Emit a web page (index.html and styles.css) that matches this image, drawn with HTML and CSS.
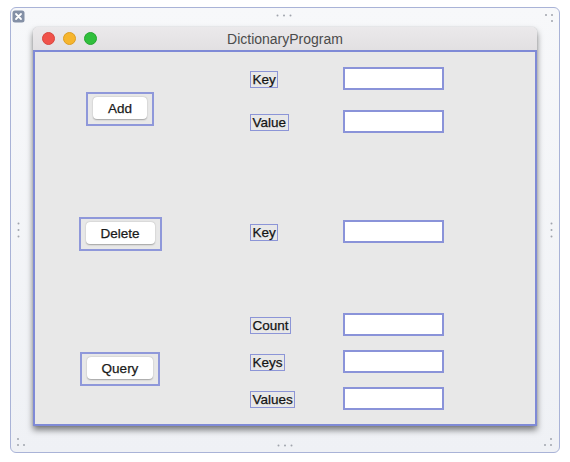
FILE: index.html
```html
<!DOCTYPE html>
<html>
<head>
<meta charset="utf-8">
<link rel="stylesheet" href="styles.css">
</head>
<body>
<div class="frame">
  <svg class="h h-close" width="13" height="13" viewBox="0 0 13 13"><rect x="0.5" y="0.5" width="12" height="12" rx="2.5" fill="#8490a6"/><path d="M4 4 L9 9 M9 4 L4 9" stroke="#fff" stroke-width="1.8" stroke-linecap="round"/></svg>
  <svg class="h h-top" width="16" height="3" viewBox="0 0 16 3"><circle cx="1.5" cy="1.5" r="1" fill="#a0a4ad"/><circle cx="8" cy="1.5" r="1" fill="#a0a4ad"/><circle cx="14.5" cy="1.5" r="1" fill="#a0a4ad"/></svg>
  <svg class="h h-tr" width="10" height="10" viewBox="0 0 10 10"><circle cx="2" cy="2" r="1" fill="#a0a4ad"/><circle cx="8" cy="2" r="1" fill="#a0a4ad"/><circle cx="8" cy="8" r="1" fill="#a0a4ad"/></svg>
  <svg class="h h-l" width="3" height="16" viewBox="0 0 3 16"><circle cx="1.5" cy="1.5" r="1" fill="#a0a4ad"/><circle cx="1.5" cy="8" r="1" fill="#a0a4ad"/><circle cx="1.5" cy="14.5" r="1" fill="#a0a4ad"/></svg>
  <svg class="h h-r" width="3" height="16" viewBox="0 0 3 16"><circle cx="1.5" cy="1.5" r="1" fill="#a0a4ad"/><circle cx="1.5" cy="8" r="1" fill="#a0a4ad"/><circle cx="1.5" cy="14.5" r="1" fill="#a0a4ad"/></svg>
  <svg class="h h-bl" width="10" height="10" viewBox="0 0 10 10"><circle cx="2" cy="2" r="1" fill="#a0a4ad"/><circle cx="2" cy="8" r="1" fill="#a0a4ad"/><circle cx="8" cy="8" r="1" fill="#a0a4ad"/></svg>
  <svg class="h h-bot" width="16" height="3" viewBox="0 0 16 3"><circle cx="1.5" cy="1.5" r="1" fill="#a0a4ad"/><circle cx="8" cy="1.5" r="1" fill="#a0a4ad"/><circle cx="14.5" cy="1.5" r="1" fill="#a0a4ad"/></svg>
  <svg class="h h-br" width="10" height="10" viewBox="0 0 10 10"><circle cx="8" cy="2" r="1" fill="#a0a4ad"/><circle cx="2" cy="8" r="1" fill="#a0a4ad"/><circle cx="8" cy="8" r="1" fill="#a0a4ad"/></svg>

  <div class="window">
    <div class="titlebar">
      <div class="lights">
        <span class="light red"></span>
        <span class="light yellow"></span>
        <span class="light green"></span>
      </div>
      <div class="title">DictionaryProgram</div>
    </div>
    <div class="content">
      <div class="section s1">
        <div class="btncol"><div class="outline o1"><div class="btn b-add">Add</div></div></div>
        <div class="form g1">
          <span class="label">Key</span><span class="field"></span>
          <span class="label">Value</span><span class="field"></span>
        </div>
      </div>
      <div class="section s2">
        <div class="btncol"><div class="outline o2"><div class="btn b-del">Delete</div></div></div>
        <div class="form">
          <span class="label">Key</span><span class="field"></span>
        </div>
      </div>
      <div class="section s3">
        <div class="btncol"><div class="outline o3"><div class="btn b-query">Query</div></div></div>
        <div class="form g3">
          <span class="label">Count</span><span class="field"></span>
          <span class="label">Keys</span><span class="field"></span>
          <span class="label">Values</span><span class="field"></span>
        </div>
      </div>
    </div>
  </div>
</div>
</body>
</html>
```
FILE: styles.css
```css
html, body {
  margin: 0;
  padding: 0;
  background: #ffffff;
  font-family: "Liberation Sans", Arial, sans-serif;
}

.frame {
  position: relative;
  box-sizing: border-box;
  width: 550px;
  height: 446px;
  margin: 7px 0 0 10px;
  padding: 19px 0 0 22px;
  border: 1.5px solid #a9b3d7;
  border-radius: 6px;
  background: linear-gradient(#f7f8fa, #eff1f5);
}

.h { position: absolute; display: block; }
.h-close { left: 1px; top: 2px; }
.h-top { left: 265px; top: 6px; }
.h-tr { right: 5px; top: 5px; }
.h-l { left: 6px; top: 214px; }
.h-r { right: 6px; top: 214px; }
.h-bl { left: 5px; bottom: 5px; }
.h-bot { left: 266px; bottom: 5px; }
.h-br { right: 6px; bottom: 5px; }

.window {
  width: 504px;
  height: 399px;
  display: flex;
  flex-direction: column;
  border-radius: 5px 5px 0 0;
  box-shadow: 0 4px 6px rgba(0, 0, 0, 0.5), 0 0 1px rgba(0, 0, 0, 0.3);
}

.titlebar {
  position: relative;
  height: 23px;
  flex: none;
  display: flex;
  align-items: center;
  justify-content: center;
  background: linear-gradient(#ebe9eb, #e2e0e2);
  border-radius: 5px 5px 0 0;
}

.lights {
  position: absolute;
  left: 9px;
  top: 5px;
  display: flex;
  gap: 8px;
}

.light {
  width: 13px;
  height: 13px;
  border-radius: 50%;
  box-sizing: border-box;
}
.red { background: #f0524a; border: 0.5px solid #d8453e; }
.yellow { background: #f6b52d; border: 0.5px solid #dc9d22; }
.green { background: #30bf3c; border: 0.5px solid #25a530; }

.title {
  font-size: 14px;
  color: #4b4b4b;
  padding-top: 1px;
}

.content {
  flex: 1;
  box-sizing: border-box;
  border: 2px solid #7f8ad6;
  background: #e8e8e8;
  padding-top: 15px;
  display: flex;
  flex-direction: column;
}

.section {
  display: flex;
  align-items: flex-start;
}
.s2 { margin-top: 87px; }
.s3 { margin-top: 62px; }

.btncol {
  width: 170px;
  flex: none;
  display: flex;
  justify-content: center;
}

.outline {
  border: 2px solid #8f98da;
  padding: 3px 5px 5px;
}
.o1 { margin-top: 25px; }
.o2 { margin-top: -3px; }
.o3 { margin-top: 39px; }

.btn {
  height: 22px;
  box-sizing: border-box;
  background: #ffffff;
  border-radius: 4px;
  box-shadow: 0 0.5px 1.5px rgba(0, 0, 0, 0.3);
  font-size: 13.5px;
  color: #1a1a1a;
  -webkit-text-stroke: 0.25px #1a1a1a;
  display: flex;
  align-items: center;
  justify-content: center;
}
.b-add { width: 54px; }
.b-del { width: 69px; }
.b-query { width: 66px; }

.form {
  margin-left: 45px;
  display: grid;
  grid-template-columns: 93px 101px;
  grid-auto-rows: 23px;
}
.g1 { row-gap: 20px; }
.g3 { row-gap: 14px; }

.label {
  justify-self: start;
  align-self: center;
  border: 1.5px solid #8c95d7;
  padding: 0 1.5px;
  line-height: 15px;
  font-size: 13.5px;
  color: #141414;
  -webkit-text-stroke: 0.25px #141414;
  margin-top: 1px;
}

.field {
  box-sizing: border-box;
  height: 23px;
  border: 2px solid #8a93d9;
  background: #ffffff;
}
```
